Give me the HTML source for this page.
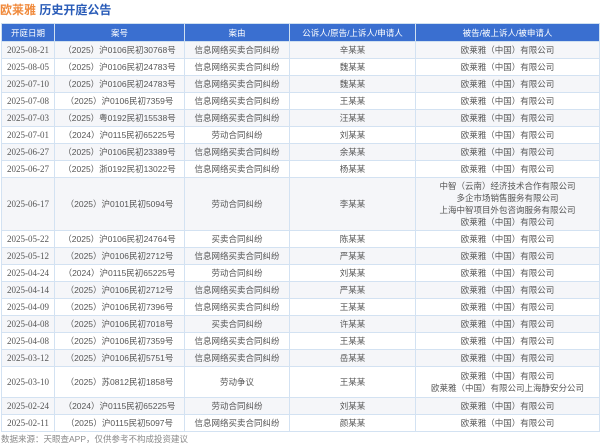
<!DOCTYPE html><html><head><meta charset="utf-8"><style>
body{margin:0;background:#fff;width:600px;height:445px;overflow:hidden;font-family:"Liberation Sans","Noto Sans CJK SC",sans-serif;}
.t{position:absolute;left:0px;top:1px;font-size:12px;font-weight:bold;letter-spacing:0}
table{position:absolute;left:1px;top:23px;width:598px;border-collapse:collapse;font-size:8.5px;color:#555;table-layout:fixed}
th{background:#3a6fd0;color:#fff;font-weight:normal;height:17px;padding:0;border:1px solid #cfe0f0;font-size:8.5px}
td{border:1px solid #d3e2f2;text-align:center;padding:0;height:16px;line-height:12px}
tbody tr:nth-child(odd) td{background:#f5f6f9}
td.d{font-family:"Liberation Serif","Noto Serif CJK SC",serif;font-size:9px}
.f{position:absolute;left:1px;top:433px;font-size:8.5px;color:#888}
</style></head><body>
<div class="t"><span style="color:#f08a3c">欧莱雅</span> <span style="color:#2a5cb8">历史开庭公告</span></div>
<table>
<colgroup><col style="width:53px"><col style="width:130px"><col style="width:105px"><col style="width:126px"><col style="width:184px"></colgroup>
<thead><tr><th>开庭日期</th><th>案号</th><th>案由</th><th>公诉人/原告/上诉人/申请人</th><th>被告/被上诉人/被申请人</th></tr></thead>
<tbody>
<tr><td class="d">2025-08-21</td><td>（2025）沪0106民初30768号</td><td>信息网络买卖合同纠纷</td><td>辛某某</td><td>欧莱雅（中国）有限公司</td></tr>
<tr><td class="d">2025-08-05</td><td>（2025）沪0106民初24783号</td><td>信息网络买卖合同纠纷</td><td>魏某某</td><td>欧莱雅（中国）有限公司</td></tr>
<tr><td class="d">2025-07-10</td><td>（2025）沪0106民初24783号</td><td>信息网络买卖合同纠纷</td><td>魏某某</td><td>欧莱雅（中国）有限公司</td></tr>
<tr><td class="d">2025-07-08</td><td>（2025）沪0106民初7359号</td><td>信息网络买卖合同纠纷</td><td>王某某</td><td>欧莱雅（中国）有限公司</td></tr>
<tr><td class="d">2025-07-03</td><td>（2025）粤0192民初15538号</td><td>信息网络买卖合同纠纷</td><td>汪某某</td><td>欧莱雅（中国）有限公司</td></tr>
<tr><td class="d">2025-07-01</td><td>（2024）沪0115民初65225号</td><td>劳动合同纠纷</td><td>刘某某</td><td>欧莱雅（中国）有限公司</td></tr>
<tr><td class="d">2025-06-27</td><td>（2025）沪0106民初23389号</td><td>信息网络买卖合同纠纷</td><td>余某某</td><td>欧莱雅（中国）有限公司</td></tr>
<tr><td class="d">2025-06-27</td><td>（2025）浙0192民初13022号</td><td>信息网络买卖合同纠纷</td><td>杨某某</td><td>欧莱雅（中国）有限公司</td></tr>
<tr><td class="d" style="height:52px">2025-06-17</td><td>（2025）沪0101民初5094号</td><td>劳动合同纠纷</td><td>李某某</td><td>中智（云南）经济技术合作有限公司<br>多企市场销售服务有限公司<br>上海中智项目外包咨询服务有限公司<br>欧莱雅（中国）有限公司</td></tr>
<tr><td class="d">2025-05-22</td><td>（2025）沪0106民初24764号</td><td>买卖合同纠纷</td><td>陈某某</td><td>欧莱雅（中国）有限公司</td></tr>
<tr><td class="d">2025-05-12</td><td>（2025）沪0106民初2712号</td><td>信息网络买卖合同纠纷</td><td>严某某</td><td>欧莱雅（中国）有限公司</td></tr>
<tr><td class="d">2025-04-24</td><td>（2024）沪0115民初65225号</td><td>劳动合同纠纷</td><td>刘某某</td><td>欧莱雅（中国）有限公司</td></tr>
<tr><td class="d">2025-04-14</td><td>（2025）沪0106民初2712号</td><td>信息网络买卖合同纠纷</td><td>严某某</td><td>欧莱雅（中国）有限公司</td></tr>
<tr><td class="d">2025-04-09</td><td>（2025）沪0106民初7396号</td><td>信息网络买卖合同纠纷</td><td>王某某</td><td>欧莱雅（中国）有限公司</td></tr>
<tr><td class="d">2025-04-08</td><td>（2025）沪0106民初7018号</td><td>买卖合同纠纷</td><td>许某某</td><td>欧莱雅（中国）有限公司</td></tr>
<tr><td class="d">2025-04-08</td><td>（2025）沪0106民初7359号</td><td>信息网络买卖合同纠纷</td><td>王某某</td><td>欧莱雅（中国）有限公司</td></tr>
<tr><td class="d">2025-03-12</td><td>（2025）沪0106民初5751号</td><td>信息网络买卖合同纠纷</td><td>岳某某</td><td>欧莱雅（中国）有限公司</td></tr>
<tr><td class="d" style="height:30px">2025-03-10</td><td>（2025）苏0812民初1858号</td><td>劳动争议</td><td>王某某</td><td>欧莱雅（中国）有限公司<br>欧莱雅（中国）有限公司上海静安分公司</td></tr>
<tr><td class="d">2025-02-24</td><td>（2024）沪0115民初65225号</td><td>劳动合同纠纷</td><td>刘某某</td><td>欧莱雅（中国）有限公司</td></tr>
<tr><td class="d">2025-02-11</td><td>（2025）沪0115民初5097号</td><td>信息网络买卖合同纠纷</td><td>颜某某</td><td>欧莱雅（中国）有限公司</td></tr>
</tbody></table>
<div class="f">数据来源：天眼查APP，仅供参考不构成投资建议</div>
</body></html>
